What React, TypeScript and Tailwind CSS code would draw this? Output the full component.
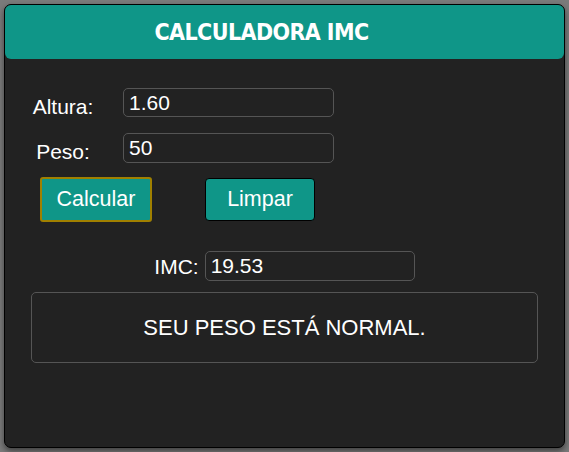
import React from 'react';

const App = () => {
  return (
    <div className="w-[569px] h-[452px] bg-[#7b7b7b] p-[4px] font-['Liberation_Sans',Arial,sans-serif]">
      <div className="h-[444px] bg-[#222222] border border-black rounded-[7px] shadow-[0_3px_6px_rgba(0,0,0,0.5)] flex flex-col">
        <header className="h-[54px] shrink-0 bg-[#0f9688] rounded-[6px] flex items-center justify-center pr-[46px]">
          <h1 className="text-white font-bold text-[23px] tracking-[-0.6px] font-['DejaVu_Sans_Condensed','DejaVu_Sans',sans-serif]">
            CALCULADORA IMC
          </h1>
        </header>

        <div className="flex items-start h-[29px] mt-[29px] pl-[17px]">
          <label className="w-[82px] pt-[9px] leading-[20px] text-center text-white text-[21px]">Altura:</label>
          <input
            readOnly
            value="1.60"
            className="ml-[19px] w-[211px] h-[29px] bg-transparent border border-[#555555] rounded-[5px] px-[5px] text-white text-[21px] outline-none"
          />
        </div>

        <div className="flex items-start h-[30px] mt-[16px] pl-[17px]">
          <label className="w-[82px] pt-[9px] leading-[20px] text-center text-white text-[21px]">Peso:</label>
          <input
            readOnly
            value="50"
            className="ml-[19px] w-[211px] h-[30px] bg-transparent border border-[#555555] rounded-[5px] px-[5px] text-white text-[21px] outline-none"
          />
        </div>

        <div className="flex items-center h-[45px] mt-[14px] pl-[35px]">
          <button className="w-[112px] h-[45px] bg-[#0f9688] border-2 border-[#a08000] rounded-[3px] text-white text-[21.5px]">
            Calcular
          </button>
          <button className="ml-[53px] w-[110px] h-[43px] bg-[#0f9688] border border-black rounded-[4px] text-white text-[21.5px]">
            Limpar
          </button>
        </div>

        <div className="flex items-center justify-center h-[30px] gap-[6px] mt-[29px]">
          <label className="leading-none text-white text-[21px]">IMC:</label>
          <input
            readOnly
            value="19.53"
            className="w-[210px] h-[30px] bg-transparent border border-[#555555] rounded-[5px] px-[5px] text-white text-[21px] outline-none"
          />
        </div>

        <div className="mx-[26px] mt-[11px] h-[71px] border border-[#555555] rounded-[5px] flex items-center justify-center">
          <p className="text-white text-[22px]">SEU PESO ESTÁ NORMAL.</p>
        </div>
      </div>
    </div>
  );
};

export default App;
